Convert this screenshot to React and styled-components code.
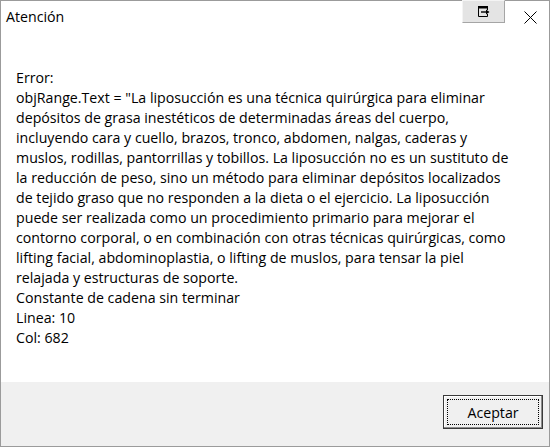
import styled, { createGlobalStyle } from 'styled-components';

const GlobalStyle = createGlobalStyle`
  html, body {
    margin: 0;
    padding: 0;
    background: #ffffff;
  }
  body {
    font-family: "Open Sans", "Noto Sans", sans-serif;
    color: #000000;
  }
`;

const Window = styled.div`
  box-sizing: border-box;
  width: 550px;
  height: 447px;
  border: 1px solid #9b9b9b;
  background: #ffffff;
  display: flex;
  flex-direction: column;
`;

const TitleBar = styled.div`
  height: 32px;
  display: flex;
  align-items: flex-start;
`;

const Title = styled.div`
  flex: 1;
  padding-left: 5px;
  line-height: 32px;
  font-size: 14.2px;
`;

const PinButton = styled.div`
  box-sizing: border-box;
  width: 43px;
  height: 23px;
  margin-top: -1px;
  background: #e4e4e4;
  border: 1px solid #f4f4f4;
  border-right-color: #a5a5a5;
  border-bottom-color: #a5a5a5;
  display: flex;
  align-items: center;
  justify-content: center;
`;

const CloseButton = styled.div`
  box-sizing: border-box;
  width: 44px;
  height: 32px;
  padding-left: 19px;
  display: flex;
  align-items: center;
`;

const Body = styled.div`
  flex: 1;
  padding: 35px 0 0 15px;
  font-size: 14.2px;
  line-height: 20px;
`;

const Line = styled.div`
  white-space: nowrap;
`;

const Footer = styled.div`
  height: 64px;
  background: #f0f0f0;
  display: flex;
  justify-content: flex-end;
  align-items: flex-start;
  padding: 13px 6px 0 0;
  box-sizing: border-box;
`;

const DefaultButton = styled.button`
  box-sizing: border-box;
  width: 100px;
  height: 34px;
  padding: 3px;
  background: #f0f0f0;
  border: 1px solid #3a3a3a;
  box-shadow: inset -1px -1px 0 #8c8c8c, inset 1px 1px 0 #ffffff;
  font-family: inherit;
  font-size: 14.2px;
  color: #000000;
  cursor: default;
`;

const FocusRect = styled.span`
  display: flex;
  height: 100%;
  align-items: center;
  justify-content: center;
  box-sizing: border-box;
  border: 1px dotted #000000;
`;

const lines = [
  'Error:',
  'objRange.Text = "La liposucción es una técnica quirúrgica para eliminar',
  'depósitos de grasa inestéticos de determinadas áreas del cuerpo,',
  'incluyendo cara y cuello, brazos, tronco, abdomen, nalgas, caderas y',
  'muslos, rodillas, pantorrillas y tobillos. La liposucción no es un sustituto de',
  'la reducción de peso, sino un método para eliminar depósitos localizados',
  'de tejido graso que no responden a la dieta o el ejercicio. La liposucción',
  'puede ser realizada como un procedimiento primario para mejorar el',
  'contorno corporal, o en combinación con otras técnicas quirúrgicas, como',
  'lifting facial, abdominoplastia, o lifting de muslos, para tensar la piel',
  'relajada y estructuras de soporte.',
  'Constante de cadena sin terminar',
  'Linea: 10',
  'Col: 682',
];

const App = () => {
  return (
    <>
      <GlobalStyle />
      <Window>
        <TitleBar>
          <Title>Atención</Title>
          <PinButton>
            <svg width="12" height="11" viewBox="0 0 12 11">
              <path d="M0.5 1.5 V10.5 H9.5 V8" fill="none" stroke="#000" strokeWidth="1" />
              <path d="M0 0 H10 V2.5 H0 Z" fill="#000" />
              <path d="M9.5 2 V4" fill="none" stroke="#000" strokeWidth="1" />
              <path d="M3 6 H9" stroke="#000" strokeWidth="1.4" />
              <path d="M8 3.5 L11.5 6 L8 8.5 Z" fill="#000" />
            </svg>
          </PinButton>
          <CloseButton>
            <svg width="13" height="13" viewBox="0 0 13 13">
              <path d="M0.5 0.5 L12.5 12.5 M12.5 0.5 L0.5 12.5" stroke="#000" strokeWidth="1" />
            </svg>
          </CloseButton>
        </TitleBar>
        <Body>
          {lines.map((text, i) => (
            <Line key={i}>{text}</Line>
          ))}
        </Body>
        <Footer>
          <DefaultButton>
            <FocusRect>Aceptar</FocusRect>
          </DefaultButton>
        </Footer>
      </Window>
    </>
  );
};

export default App;
